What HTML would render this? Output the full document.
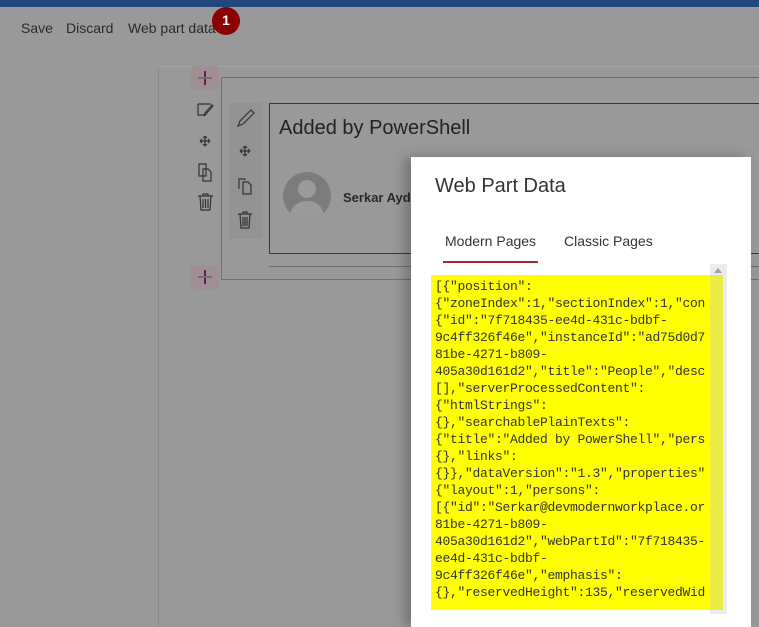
<!DOCTYPE html>
<html><head><meta charset="utf-8"><style>
*{margin:0;padding:0;box-sizing:border-box}
body{width:759px;height:615px;overflow:hidden;background:#999;font-family:"Segoe UI","Liberation Sans",sans-serif;position:relative}
.a{position:absolute}
.top{left:0;top:0;width:759px;height:7px;background:#22467e}
.cmd{top:20px;font-size:14px;color:#2a2a2a}
.badge{left:212px;top:7px;width:28px;height:28px;border-radius:50%;background:#8b0000;color:#fff;font-size:14px;font-weight:bold;text-align:center;line-height:26px}
.plus{width:28px;height:24px;background:#a08e95;border-radius:3px}
.plus:before{content:"";position:absolute;left:13px;top:5px;width:1.5px;height:14px;background:#6a1a5a}
.plus:after{content:"";position:absolute;left:7px;top:11px;width:14px;height:1.5px;background:#7a6a72}
.modal{left:411px;top:157px;width:340px;height:470px;background:#fff;box-shadow:-6px 0 12px rgba(0,0,0,.25)}
pre{font-family:"Liberation Mono","DejaVu Sans Mono",monospace;font-size:13px;line-height:17px;color:#333;letter-spacing:-0.3px}
</style></head><body>
<div class="a top"></div>
<div class="a cmd" style="left:21px">Save</div>
<div class="a cmd" style="left:66px">Discard</div>
<div class="a cmd" style="left:128px">Web part data</div>
<div class="a badge">1</div>

<div class="a" style="left:158px;top:66px;width:610px;height:560px;border-left:1px solid #8a8a8a;border-top:1px solid #a6a6a6"></div>
<div class="a plus" style="left:191px;top:66px"></div>
<div class="a plus" style="left:191px;top:265px"></div>
<div class="a" style="left:221px;top:77px;width:560px;height:203px;border:1px solid #6e6e6e"></div>

<svg class="a" style="left:195px;top:100px" width="22" height="115" viewBox="0 0 22 115" fill="none" stroke="#333" stroke-width="1.2">
<path d="M3 4h13M3 4v11h8M18 6l-7 8-2 2 1-3 7-8z"/>
<path d="M10 36v10M5 41h10M10 36l-2 2M10 36l2 2M10 46l-2-2M10 46l2-2M5 41l2-2M5 41l2 2M15 41l-2-2M15 41l-2 2"/>
<path d="M4 66v-2h7l0 12h-7zM8 69h5l3 3v9h-8z"/>
<path d="M3 96h15M8 96v-2h5v2M5 96l1 14h9l1-14M8 99v9M10.5 99v9M13 99v9"/>
</svg>

<div class="a" style="left:229px;top:103px;width:34px;height:136px;background:#939393"></div>
<svg class="a" style="left:234px;top:108px" width="22" height="125" viewBox="0 0 22 125" fill="none" stroke="#333" stroke-width="1.2">
<path d="M4 18l2-5 11-11 3 3-11 11z"/>
<path d="M11 38v10M6 43h10M11 38l-2 2M11 38l2 2M11 48l-2-2M11 48l2-2M6 43l2-2M6 43l2 2M16 43l-2-2M16 43l-2 2"/>
<path d="M5 81v-10h6v1M9 74h5l3 3v9h-8z"/>
<path d="M4 106h14M9 106v-2h4v2M6 106l1 14h8l1-14M9 109v9M11 109v9M13 109v9"/>
</svg>

<div class="a" style="left:269px;top:103px;width:500px;height:151px;border:1px solid #6e2222"></div>
<div class="a" style="left:279px;top:117px;font-size:20px;color:#222">Added by PowerShell</div>
<div class="a" style="left:283px;top:172px;width:48px;height:48px;border-radius:50%;background:#7c7c7c;overflow:hidden">
 <div class="a" style="left:15px;top:8px;width:18px;height:18px;border-radius:50%;background:#9a9a9a"></div>
 <div class="a" style="left:7px;top:29px;width:34px;height:30px;border-radius:50%;background:#9a9a9a"></div>
</div>
<div class="a" style="left:343px;top:190px;font-size:13px;font-weight:600;color:#2a2a2a">Serkar Ayd</div>
<div class="a" style="left:269px;top:266px;width:500px;height:1px;background:#6e6e6e"></div>

<div class="a modal">
 <div class="a" style="left:24px;top:18px;font-size:20px;color:#333">Web Part Data</div>
 <div class="a" style="left:34px;top:76px;font-size:14px;color:#333">Modern Pages</div>
 <div class="a" style="left:153px;top:76px;font-size:14px;color:#333">Classic Pages</div>
 <div class="a" style="left:32px;top:104px;width:95px;height:2px;background:#a4262c"></div>
 <div class="a" style="left:20px;top:118px;width:292px;height:335px;background:#ffff00"></div>
 <div class="a" style="left:20px;top:118px;width:279px;height:335px;overflow:hidden">
<pre style="position:absolute;left:4px;top:3px">[{"position":
{"zoneIndex":1,"sectionIndex":1,"con
{"id":"7f718435-ee4d-431c-bdbf-
9c4ff326f46e","instanceId":"ad75d0d7
81be-4271-b809-
405a30d161d2","title":"People","desc
[],"serverProcessedContent":
{"htmlStrings":
{},"searchablePlainTexts":
{"title":"Added by PowerShell","pers
{},"links":
{}},"dataVersion":"1.3","properties"
{"layout":1,"persons":
[{"id":"Serkar@devmodernworkplace.or
81be-4271-b809-
405a30d161d2","webPartId":"7f718435-
ee4d-431c-bdbf-
9c4ff326f46e","emphasis":
{},"reservedHeight":135,"reservedWid</pre>
 </div>
 <div class="a" style="left:299px;top:107px;width:17px;height:350px;background:rgba(200,200,200,.35)"></div>
 <div class="a" style="left:303px;top:111px;width:0;height:0;border-left:4px solid transparent;border-right:4px solid transparent;border-bottom:5px solid #a0a0a0"></div>
</div>
</body></html>
